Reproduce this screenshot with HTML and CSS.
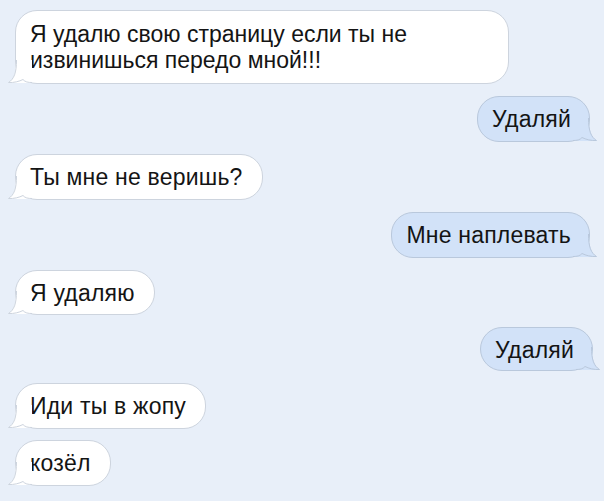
FILE: index.html
```html
<!DOCTYPE html>
<html lang="ru">
<head>
    <meta charset="UTF-8">
    <meta name="viewport" content="width=device-width, initial-scale=1.0">
    <title>Переписка</title>
    <link rel="stylesheet" href="styles.css">
</head>
<body>
    <div class="chat">
        <div class="msg msg-in msg-wide">
            Я удалю свою страницу если ты не<br>извинишься передо мной!!!
            <svg class="tail" width="24" height="24" viewBox="0 0 24 24"><path class="tail-fill" d="M8 0 H24 V23 H0 C5 20 8 14 8 0 Z"/><path class="tail-line" d="M8.5 0 C8.5 13 6 19 0.5 22.5 C6 22.8 11 21.5 15 19.5 C17 22 20 22.5 24 22.5"/></svg>
        </div>
        <div class="msg msg-out">
            Удаляй
            <svg class="tail" width="24" height="24" viewBox="0 0 24 24"><path class="tail-fill" d="M16 0 H0 V23 H24 C19 20 16 14 16 0 Z"/><path class="tail-line" d="M15.5 0 C15.5 13 18 19 23.5 22.5 C18 22.8 13 21.5 9 19.5 C7 22 4 22.5 0 22.5"/></svg>
        </div>
        <div class="msg msg-in">
            Ты мне не веришь?
            <svg class="tail" width="24" height="24" viewBox="0 0 24 24"><path class="tail-fill" d="M8 0 H24 V23 H0 C5 20 8 14 8 0 Z"/><path class="tail-line" d="M8.5 0 C8.5 13 6 19 0.5 22.5 C6 22.8 11 21.5 15 19.5 C17 22 20 22.5 24 22.5"/></svg>
        </div>
        <div class="msg msg-out">
            Мне наплевать
            <svg class="tail" width="24" height="24" viewBox="0 0 24 24"><path class="tail-fill" d="M16 0 H0 V23 H24 C19 20 16 14 16 0 Z"/><path class="tail-line" d="M15.5 0 C15.5 13 18 19 23.5 22.5 C18 22.8 13 21.5 9 19.5 C7 22 4 22.5 0 22.5"/></svg>
        </div>
        <div class="msg msg-in msg-short">
            Я удаляю
            <svg class="tail" width="24" height="24" viewBox="0 0 24 24"><path class="tail-fill" d="M8 0 H24 V23 H0 C5 20 8 14 8 0 Z"/><path class="tail-line" d="M8.5 0 C8.5 13 6 19 0.5 22.5 C6 22.8 11 21.5 15 19.5 C17 22 20 22.5 24 22.5"/></svg>
        </div>
        <div class="msg msg-out msg-last-out">
            Удаляй
            <svg class="tail" width="24" height="24" viewBox="0 0 24 24"><path class="tail-fill" d="M16 0 H0 V23 H24 C19 20 16 14 16 0 Z"/><path class="tail-line" d="M15.5 0 C15.5 13 18 19 23.5 22.5 C18 22.8 13 21.5 9 19.5 C7 22 4 22.5 0 22.5"/></svg>
        </div>
        <div class="msg msg-in">
            Иди ты в жопу
            <svg class="tail" width="24" height="24" viewBox="0 0 24 24"><path class="tail-fill" d="M8 0 H24 V23 H0 C5 20 8 14 8 0 Z"/><path class="tail-line" d="M8.5 0 C8.5 13 6 19 0.5 22.5 C6 22.8 11 21.5 15 19.5 C17 22 20 22.5 24 22.5"/></svg>
        </div>
        <div class="msg msg-in msg-tight">
            козёл
            <svg class="tail" width="24" height="24" viewBox="0 0 24 24"><path class="tail-fill" d="M8 0 H24 V23 H0 C5 20 8 14 8 0 Z"/><path class="tail-line" d="M8.5 0 C8.5 13 6 19 0.5 22.5 C6 22.8 11 21.5 15 19.5 C17 22 20 22.5 24 22.5"/></svg>
        </div>
    </div>
</body>
</html>
```

FILE: styles.css
```css
body {
    margin: 0;
    background-color: #e8eff9;
    font-family: "Liberation Sans", Arial, sans-serif;
    color: #141414;
}
.chat {
    display: flex;
    flex-direction: column;
    gap: 12px;
    padding: 10px 14px 0 15px;
}
.msg {
    position: relative;
    padding: 9px 19px 9px 14px;
    font-size: 23px;
    line-height: 26px;
    letter-spacing: 0.2px;
    border-radius: 22px;
    border: 1px solid #cdd4de;
}
.msg-in {
    align-self: flex-start;
    background-color: #ffffff;
}
.msg-out {
    align-self: flex-end;
    padding-right: 18px;
    background-color: #d2e2f8;
    border-color: #b9c8dc;
}
.msg-wide {
    width: 459px;
    padding-top: 10px;
    padding-bottom: 10px;
    letter-spacing: 0;
}
.msg-short {
    padding-bottom: 8px;
}
.msg-last-out {
    margin-right: -3px;
    padding-bottom: 7px;
}
.msg-tight {
    margin-top: -1px;
}
.tail {
    position: absolute;
    bottom: -1px;
}
.msg-in .tail {
    left: -8px;
}
.msg-out .tail {
    right: -8px;
}
.tail-fill {
    stroke: none;
}
.msg-in .tail-fill {
    fill: #ffffff;
}
.msg-out .tail-fill {
    fill: #d2e2f8;
}
.tail-line {
    fill: none;
    stroke-width: 1;
}
.msg-in .tail-line {
    stroke: #cdd4de;
}
.msg-out .tail-line {
    stroke: #b9c8dc;
}
```
